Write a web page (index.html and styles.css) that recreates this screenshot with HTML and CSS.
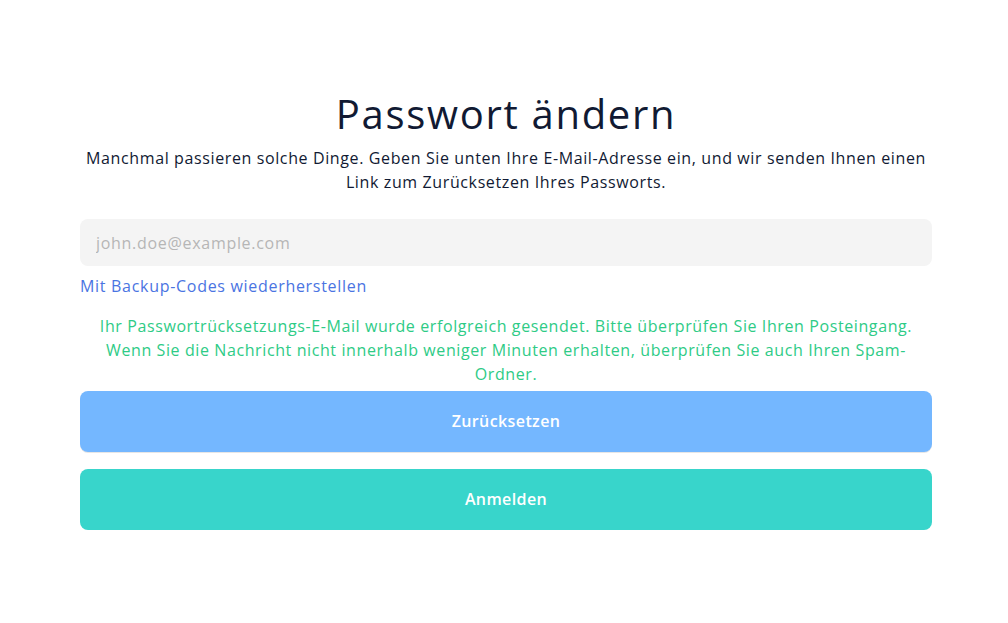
FILE: index.html
```html
<!DOCTYPE html>
<html lang="de">
<head>
<meta charset="utf-8">
<title>Passwort ändern</title>
<link rel="stylesheet" href="styles.css">
</head>
<body>
<main class="page">
  <section class="card">
    <h1 class="title">Passwort ändern</h1>
    <p class="lead">Manchmal passieren solche Dinge. Geben Sie unten Ihre E-Mail-Adresse ein, und wir senden Ihnen einen Link zum Zurücksetzen Ihres Passworts.</p>
    <input class="field" type="email" placeholder="john.doe@example.com">
    <a class="link" href="#">Mit Backup-Codes wiederherstellen</a>
    <p class="success">Ihr Passwortrücksetzungs-E-Mail wurde erfolgreich gesendet. Bitte überprüfen Sie Ihren Posteingang. Wenn Sie die Nachricht nicht innerhalb weniger Minuten erhalten, überprüfen Sie auch Ihren Spam-Ordner.</p>
    <button class="btn btn-reset" type="button">Zurücksetzen</button>
    <button class="btn btn-login" type="button">Anmelden</button>
  </section>
</main>
</body>
</html>
```
FILE: styles.css
```css
* { box-sizing: border-box; }
html, body { margin: 0; padding: 0; background: #fff; }
body {
  font-family: "Open Sans", "Noto Sans", sans-serif;
  color: #111a33;
}
.page {
  padding: 86px 76px 0 80px;
}
.card {
  display: flex;
  flex-direction: column;
  width: 852px;
}
.title {
  margin: 0;
  font-size: 40px;
  font-weight: 400;
  line-height: 56px;
  letter-spacing: 1.7px;
  text-align: center;
  color: #111a33;
}
.lead {
  margin: 4px 0 0;
  font-size: 16px;
  line-height: 24px;
  letter-spacing: 0.62px;
  text-align: center;
}
.field {
  margin-top: 25px;
  height: 47px;
  border: none;
  border-radius: 8px;
  background: #f4f4f4;
  padding: 0 16px;
  font-family: inherit;
  font-size: 16px;
  letter-spacing: 0.7px;
  outline: none;
}
.field::placeholder { color: #b6b6b6; }
.link {
  margin-top: 8px;
  font-size: 16px;
  line-height: 24px;
  letter-spacing: 0.7px;
  color: #4a74e2;
  text-decoration: none;
  align-self: flex-start;
}
.success {
  margin: 16px 0 0;
  font-size: 16px;
  line-height: 24px;
  letter-spacing: 0.6px;
  font-weight: 500;
  color: #2ecb86;
  text-align: center;
}
.btn {
  height: 61px;
  border: none;
  border-radius: 8px;
  font-family: inherit;
  font-size: 16px;
  font-weight: 600;
  letter-spacing: 0.4px;
  line-height: 20px;
  padding-bottom: 2px;
  color: #fff;
  cursor: pointer;
}
.btn-reset {
  margin-top: 5px;
  background: #74b7ff;
  box-shadow: 0 1px 0 #e6e6e6;
}
.btn-login {
  margin-top: 17px;
  background: #38d5cb;
}
```
